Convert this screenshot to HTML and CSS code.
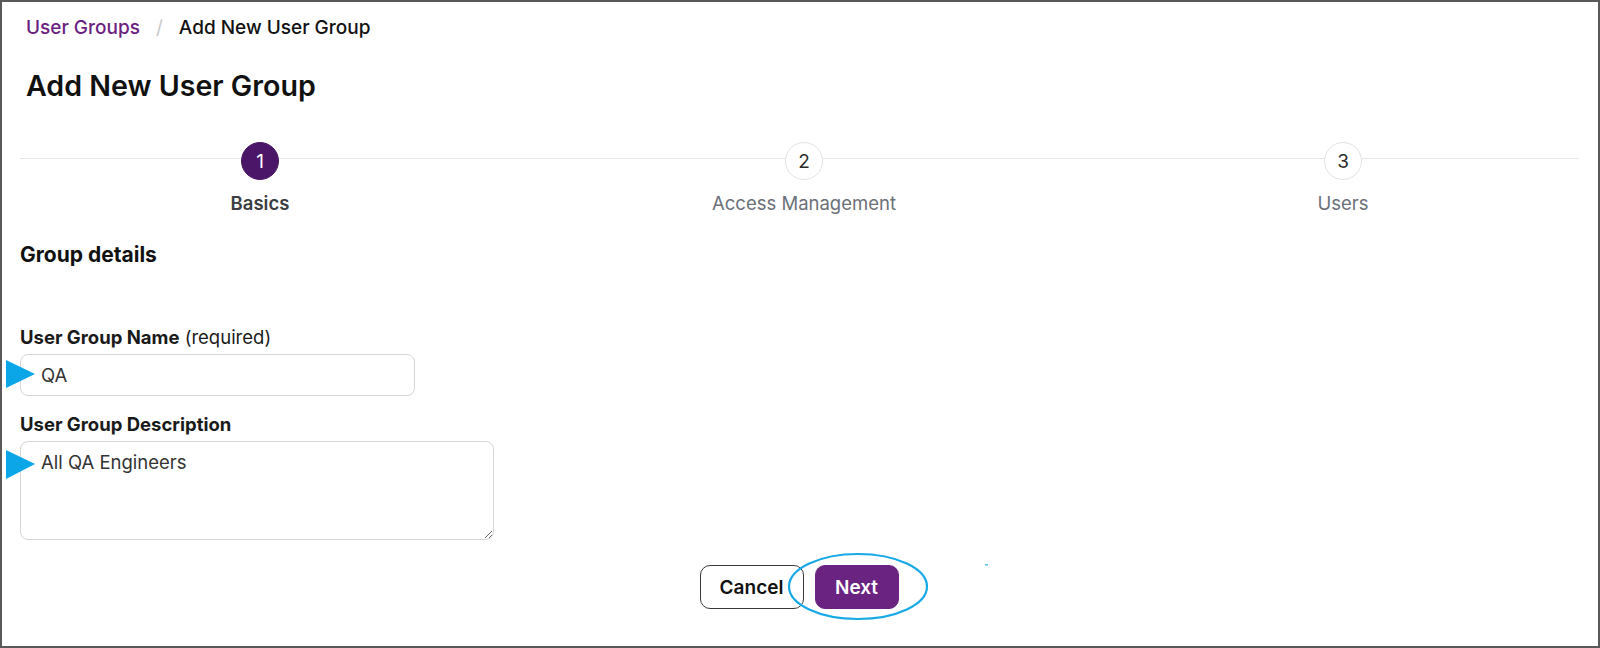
FILE: index.html
```html
<!DOCTYPE html>
<html lang="en">
<head>
<meta charset="utf-8">
<title>Add New User Group</title>
<link rel="stylesheet" href="styles.css">
</head>
<body>
<div class="frame">
  <nav class="breadcrumb">
    <a class="crumb-link" href="#">User Groups</a>
    <span class="crumb-sep">/</span>
    <span class="crumb-current">Add New User Group</span>
  </nav>
  <h1 class="title">Add New User Group</h1>

  <ol class="stepper">
    <li class="step step-active"><span class="step-dot">1</span><span class="step-label">Basics</span></li>
    <li class="step"><span class="step-dot">2</span><span class="step-label">Access Management</span></li>
    <li class="step"><span class="step-dot">3</span><span class="step-label">Users</span></li>
  </ol>

  <h2 class="section-title">Group details</h2>

  <form class="form">
    <label class="field-label" for="gname"><b>User Group Name</b> (required)</label>
    <input class="text-input" id="gname" type="text" value="QA">
    <label class="field-label field-label-2" for="gdesc"><b>User Group Description</b></label>
    <textarea class="text-area" id="gdesc">All QA Engineers</textarea>
    <div class="actions">
      <button type="button" class="btn btn-outline">Cancel</button>
      <button type="button" class="btn btn-primary">Next</button>
    </div>
  </form>

  <svg class="annotations" width="1600" height="648" viewBox="0 0 1600 648" aria-hidden="true">
    <polygon points="6,360 6,388 35,374" fill="#0aa6e8"/>
    <polygon points="6,450 6,479 35,464" fill="#0aa6e8"/>
    <ellipse cx="858" cy="586.5" rx="69" ry="32.5" fill="none" stroke="#17a9e6" stroke-width="2.2"/>
    <rect x="985" y="564" width="3" height="1.5" fill="#5cc2ee"/>
  </svg>
</div>
</body>
</html>
```
FILE: styles.css
```css
html, body {
  margin: 0;
  padding: 0;
  background: #ffffff;
}

body {
  font-family: "Inter", "Liberation Sans", sans-serif;
  color: #1a1a1a;
}

.frame {
  position: relative;
  box-sizing: border-box;
  width: 1600px;
  height: 648px;
  border: 2px solid #595959;
  padding: 14px 20px 0 18px;
  overflow: hidden;
}

.breadcrumb {
  display: flex;
  align-items: center;
  padding-left: 6px;
  font-size: 19px;
  line-height: 24px;
  font-weight: 500;
}

.crumb-link {
  color: #6b1f80;
  text-decoration: none;
}

.crumb-sep {
  color: #c9c9c9;
  margin: 0 16px 0 16px;
  font-weight: 400;
}

.crumb-current {
  color: #111111;
}

.title {
  margin: 28px 0 0 6px;
  font-size: 28.6px;
  line-height: 36px;
  font-weight: 600;
  color: #111111;
}

.stepper {
  position: relative;
  list-style: none;
  margin: 38px 0 0 0;
  padding: 0;
  display: grid;
  grid-template-columns: 480px 608px 470px;
}

.stepper::before {
  content: "";
  position: absolute;
  left: 0;
  right: 0;
  top: 16px;
  height: 1px;
  background: #e6e6e6;
}

.step {
  position: relative;
  display: flex;
  flex-direction: column;
  align-items: center;
}

.step-dot {
  box-sizing: border-box;
  width: 38px;
  height: 38px;
  border-radius: 50%;
  border: 1px solid #e3e3e3;
  background: #ffffff;
  display: flex;
  align-items: center;
  justify-content: center;
  font-size: 19px;
  color: #2b2b2b;
}

.step-label {
  margin-top: 11px;
  font-size: 18.5px;
  line-height: 24px;
  color: #6b7079;
}

.step-active .step-dot {
  background: #4b1667;
  border-color: #4b1667;
  color: #ffffff;
}

.step-active .step-label {
  color: #3a3d42;
  font-weight: 600;
}

.section-title {
  margin: 26px 0 0 0;
  font-size: 21px;
  line-height: 28px;
  font-weight: 700;
  color: #111111;
}

.form {
  display: flex;
  flex-direction: column;
  align-items: flex-start;
  margin-top: 56px;
}

.field-label {
  font-size: 18.5px;
  line-height: 24px;
  color: #1a1a1a;
}

.field-label b {
  font-weight: 700;
}

.field-label-2 {
  margin-top: 16px;
}

.text-input,
.text-area {
  box-sizing: border-box;
  margin-top: 5px;
  border: 1px solid #d6d6d9;
  border-radius: 8px;
  font-family: inherit;
  font-size: 18.5px;
  line-height: 24px;
  color: #333333;
  background: #ffffff;
  outline: none;
}

.text-input {
  width: 395px;
  height: 42px;
  padding: 0 20px;
}

.text-area {
  width: 474px;
  height: 99px;
  padding: 8px 20px;
  resize: both;
}

.actions {
  align-self: stretch;
  display: flex;
  justify-content: center;
  gap: 11px;
  margin-top: 25px;
}

.btn {
  box-sizing: border-box;
  height: 44px;
  border-radius: 10px;
  font-family: inherit;
  font-size: 19px;
  font-weight: 600;
  cursor: pointer;
}

.btn-outline {
  width: 104px;
  background: #ffffff;
  border: 1px solid #3a3a3a;
  color: #111111;
}

.btn-primary {
  width: 84px;
  background: #6a2381;
  border: 1px solid #6a2381;
  color: #ffffff;
}

.annotations {
  position: absolute;
  left: -2px;
  top: -2px;
  pointer-events: none;
}
```
